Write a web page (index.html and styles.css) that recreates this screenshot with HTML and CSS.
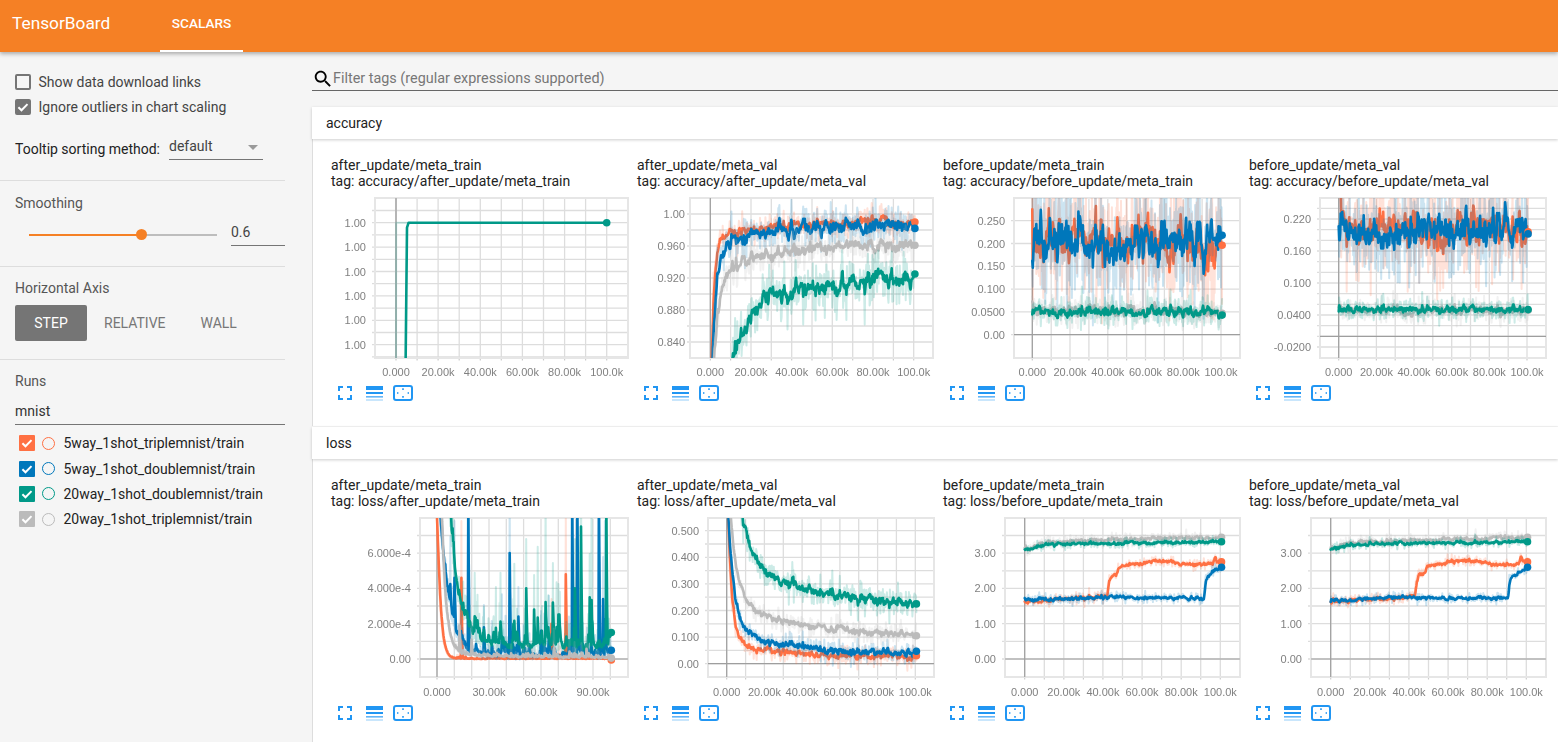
FILE: index.html
```html
<!DOCTYPE html>
<html lang="en">
<head>
<meta charset="utf-8">
<title>TensorBoard</title>
<link rel="stylesheet" href="styles.css">
</head>
<body>
<svg class="defs" width="0" height="0" aria-hidden="true">
  <symbol id="i-full" viewBox="0 0 14 14"><path class="i-stroke" d="M1 5V1h4M9 1h4v4M13 9v4H9M5 13H1V9"/></symbol>
  <symbol id="i-lines" viewBox="0 0 17 15"><rect class="i-fill" x="0" y="0" width="17" height="4"/><rect class="i-fill" x="0" y="6" width="17" height="2"/><rect class="i-fill i-p1" x="0" y="10" width="17" height="1.6"/><rect class="i-fill i-p2" x="0" y="13.4" width="17" height="1.2"/></symbol>
  <symbol id="i-fit" viewBox="0 0 20 16"><rect class="i-stroke" x="1" y="1" width="18" height="14" rx="2"/><rect class="i-fill" x="9" y="3.4" width="2" height="1.4"/><rect class="i-fill" x="9" y="11.2" width="2" height="1.4"/><rect class="i-fill" x="4" y="7.2" width="1.4" height="1.6"/><rect class="i-fill" x="14.6" y="7.2" width="1.4" height="1.6"/></symbol>
  <symbol id="i-check" viewBox="0 0 16 16"><path class="i-check" d="M3.4 8.2l3.1 3.1 6-6.2"/></symbol>
</svg>

<header class="toolbar">
  <div class="brand">TensorBoard</div>
  <div class="tab">SCALARS</div>
</header>

<div class="layout">
  <aside class="sidebar">
    <section class="sec sec-options">
      <div class="check-row"><span class="box"></span><span>Show data download links</span></div>
      <div class="check-row"><span class="box box-on"><svg class="tick-mark"><use href="#i-check"/></svg></span><span>Ignore outliers in chart scaling</span></div>
      <div class="tooltip-row">
        <span class="tooltip-label">Tooltip sorting method:</span>
        <span class="select"><span>default</span><span class="caret"></span></span>
      </div>
    </section>
    <section class="sec sec-smooth">
      <div class="sec-title">Smoothing</div>
      <div class="slider-row">
        <div class="slider"><div class="slider-done"></div><div class="slider-thumb"></div></div>
        <div class="slider-value">0.6</div>
      </div>
    </section>
    <section class="sec sec-axis">
      <div class="sec-title">Horizontal Axis</div>
      <div class="axis-buttons">
        <span class="axis-btn axis-on">STEP</span>
        <span class="axis-btn axis-rel">RELATIVE</span>
        <span class="axis-btn axis-wall">WALL</span>
      </div>
    </section>
    <section class="sec sec-runs">
      <div class="sec-title">Runs</div>
      <div class="runs-filter">mnist</div>
      <div class="run"><span class="run-box c-orange"><svg class="tick-mark"><use href="#i-check"/></svg></span><span class="run-dot c-orange"></span><span>5way_1shot_triplemnist/train</span></div>
      <div class="run"><span class="run-box c-blue"><svg class="tick-mark"><use href="#i-check"/></svg></span><span class="run-dot c-blue"></span><span>5way_1shot_doublemnist/train</span></div>
      <div class="run"><span class="run-box c-teal"><svg class="tick-mark"><use href="#i-check"/></svg></span><span class="run-dot c-teal"></span><span>20way_1shot_doublemnist/train</span></div>
      <div class="run"><span class="run-box c-gray"><svg class="tick-mark"><use href="#i-check"/></svg></span><span class="run-dot c-gray"></span><span>20way_1shot_triplemnist/train</span></div>
    </section>
  </aside>

  <main class="main">
    <div class="filter">
      <svg class="search" viewBox="0 0 24 24"><path d="M15.5 14h-.79l-.28-.27C15.41 12.59 16 11.11 16 9.5 16 5.91 13.09 3 9.5 3S3 5.91 3 9.5 5.91 16 9.5 16c1.61 0 3.09-.59 4.23-1.57l.27.28v.79l5 4.99L20.49 19l-4.99-5zm-6 0C7.01 14 5 11.99 5 9.5S7.01 5 9.5 5 14 7.01 14 9.5 11.99 14 9.5 14z"/></svg>
      <span class="filter-text">Filter tags (regular expressions supported)</span>
    </div>

    <section class="pane">
      <h2 class="pane-head">accuracy</h2>
      <div class="cards">
        <article class="card">
          <div class="card-title">after_update/meta_train<br>tag: accuracy/after_update/meta_train</div>
          <svg class="plot" data-chart="a1" data-col="0" data-row="0"></svg>
          <div class="tools"><svg class="t-full"><use href="#i-full"/></svg><svg class="t-lines"><use href="#i-lines"/></svg><svg class="t-fit"><use href="#i-fit"/></svg></div>
        </article>
        <article class="card">
          <div class="card-title">after_update/meta_val<br>tag: accuracy/after_update/meta_val</div>
          <svg class="plot" data-chart="a2" data-col="1" data-row="0"></svg>
          <div class="tools"><svg class="t-full"><use href="#i-full"/></svg><svg class="t-lines"><use href="#i-lines"/></svg><svg class="t-fit"><use href="#i-fit"/></svg></div>
        </article>
        <article class="card">
          <div class="card-title">before_update/meta_train<br>tag: accuracy/before_update/meta_train</div>
          <svg class="plot" data-chart="a3" data-col="2" data-row="0"></svg>
          <div class="tools"><svg class="t-full"><use href="#i-full"/></svg><svg class="t-lines"><use href="#i-lines"/></svg><svg class="t-fit"><use href="#i-fit"/></svg></div>
        </article>
        <article class="card">
          <div class="card-title">before_update/meta_val<br>tag: accuracy/before_update/meta_val</div>
          <svg class="plot" data-chart="a4" data-col="3" data-row="0"></svg>
          <div class="tools"><svg class="t-full"><use href="#i-full"/></svg><svg class="t-lines"><use href="#i-lines"/></svg><svg class="t-fit"><use href="#i-fit"/></svg></div>
        </article>
      </div>
    </section>

    <section class="pane">
      <h2 class="pane-head">loss</h2>
      <div class="cards">
        <article class="card">
          <div class="card-title">after_update/meta_train<br>tag: loss/after_update/meta_train</div>
          <svg class="plot" data-chart="l1" data-col="0" data-row="1"></svg>
          <div class="tools"><svg class="t-full"><use href="#i-full"/></svg><svg class="t-lines"><use href="#i-lines"/></svg><svg class="t-fit"><use href="#i-fit"/></svg></div>
        </article>
        <article class="card">
          <div class="card-title">after_update/meta_val<br>tag: loss/after_update/meta_val</div>
          <svg class="plot" data-chart="l2" data-col="1" data-row="1"></svg>
          <div class="tools"><svg class="t-full"><use href="#i-full"/></svg><svg class="t-lines"><use href="#i-lines"/></svg><svg class="t-fit"><use href="#i-fit"/></svg></div>
        </article>
        <article class="card">
          <div class="card-title">before_update/meta_train<br>tag: loss/before_update/meta_train</div>
          <svg class="plot" data-chart="l3" data-col="2" data-row="1"></svg>
          <div class="tools"><svg class="t-full"><use href="#i-full"/></svg><svg class="t-lines"><use href="#i-lines"/></svg><svg class="t-fit"><use href="#i-fit"/></svg></div>
        </article>
        <article class="card">
          <div class="card-title">before_update/meta_val<br>tag: loss/before_update/meta_val</div>
          <svg class="plot" data-chart="l4" data-col="3" data-row="1"></svg>
          <div class="tools"><svg class="t-full"><use href="#i-full"/></svg><svg class="t-lines"><use href="#i-lines"/></svg><svg class="t-fit"><use href="#i-fit"/></svg></div>
        </article>
      </div>
    </section>
  </main>
</div>
<script src="charts.js"></script>
</body>
</html>
```

FILE: styles.css
```css
* { box-sizing: border-box; }
html, body { margin: 0; height: 100%; overflow: hidden; }
body {
  background: #f5f5f5;
  color: #333;
  font-family: Roboto, "Liberation Sans", sans-serif;
  font-size: 14px;
  display: flex;
  flex-direction: column;
}
.defs { position: absolute; }

/* Toolbar */
.toolbar {
  flex: none;
  height: 52px;
  background: #f58025;
  color: #fff;
  display: flex;
  box-shadow: 0 2px 4px rgba(0, 0, 0, .3);
  position: relative;
  z-index: 2;
}
.brand { width: 160px; padding-left: 12px; font-size: 17.3px; line-height: 47px; }
.tab {
  width: 83px;
  text-align: center;
  font-size: 13.6px;
  font-weight: 500;
  line-height: 47px;
  border-bottom: 2px solid #fff;
  height: 52px;
}

.layout { flex: 1; display: flex; min-height: 0; }

/* Sidebar */
.sidebar { flex: none; width: 312px; padding-right: 27px; }
.sec { padding-left: 15px; border-bottom: 1px solid #ddd; }
.sec:last-child { border-bottom: 0; }
.sec-options { height: 129px; padding-top: 22px; }
.sec-smooth { height: 86px; padding-top: 14px; }
.sec-axis { height: 93px; padding-top: 13px; }
.sec-runs { padding-top: 13px; padding-right: 0; }
.sec-title { line-height: 16px; color: #555; }

.check-row { display: flex; align-items: center; height: 16px; margin-bottom: 9px; color: #444; gap: 7.5px; }
.box { flex: none; width: 16px; height: 16px; border: 2px solid #757575; border-radius: 2px; }
.box-on { background: #757575; }
.tick-mark { display: block; width: 16px; height: 16px; }
.box .tick-mark { margin: -2px; }
.i-check { fill: none; stroke: #fff; stroke-width: 2; }

.tooltip-row { display: flex; margin-top: 21px; height: 24px; align-items: flex-start; }
.tooltip-label { width: 154px; color: #222; line-height: 24px; padding-top: 1px; }
.select {
  width: 94px;
  height: 24px;
  border-bottom: 1px solid #757575;
  line-height: 20px;
  display: flex;
  justify-content: space-between;
  color: #444;
}
.caret {
  margin: 9px 5px 0 0;
  width: 0;
  height: 0;
  border: 5px solid transparent;
  border-top-color: #9a9a9a;
  border-bottom: 0;
}

.slider-row { display: flex; margin-top: 8px; }
.slider { width: 188px; height: 2px; margin: 15px 0 0 14px; background: #bdbdbd; position: relative; }
.slider-done { width: 112px; height: 2px; background: #f58025; }
.slider-thumb {
  position: absolute;
  left: 106.5px;
  top: -5px;
  width: 11px;
  height: 11px;
  border-radius: 50%;
  background: #f58025;
}
.slider-value {
  width: 54px;
  height: 27px;
  margin-left: 14px;
  padding-top: 3px;
  line-height: 20px;
  color: #444;
  border-bottom: 1px solid #757575;
}

.axis-buttons { display: flex; margin-top: 9px; }
.axis-btn { line-height: 36px; color: #777; }
.axis-on { width: 72px; background: #757575; color: #fff; border-radius: 2px; text-align: center; }
.axis-rel { margin-left: 17px; }
.axis-wall { margin-left: 35px; }

.runs-filter {
  margin-top: 12px;
  height: 24px;
  line-height: 20px;
  color: #333;
  border-bottom: 1px solid #757575;
  padding-top: 0;
}
.run { display: flex; align-items: center; height: 25.2px; color: #222; }
.runs-filter + .run { margin-top: 5.9px; }
.run-box { flex: none; width: 16px; height: 16px; margin-left: 4px; border-radius: 1px; }
.run-dot { flex: none; width: 13px; height: 13px; margin: 0 8.5px 0 7px; border-radius: 50%; border: 1.7px solid; background: transparent; }
.run-box.c-orange { background: #ff7043; }
.run-box.c-blue { background: #0077bb; }
.run-box.c-teal { background: #009988; }
.run-box.c-gray { background: #bbb; }
.run-dot.c-orange { border-color: #ff7043; }
.run-dot.c-blue { border-color: #0077bb; }
.run-dot.c-teal { border-color: #009988; }
.run-dot.c-gray { border-color: #bbb; }

/* Main */
.main { flex: 1; min-width: 0; }
.filter {
  height: 39px;
  margin-bottom: 16px;
  border-bottom: 1px solid #666;
  display: flex;
  align-items: flex-start;
}
.search { flex: none; width: 22px; height: 22px; margin-top: 16px; margin-right: -1px; }
.filter-text { color: #777; font-size: 14.4px; line-height: 20px; padding-top: 17px; }
.pane { background: #fff; margin-bottom: 1px; }
.pane-head {
  margin: 0;
  height: 32px;
  padding-left: 14px;
  font-size: 14px;
  font-weight: 400;
  line-height: 32px;
  color: #222;
  background: #fff;
  box-shadow: 0 1px 3px rgba(0, 0, 0, .2);
  position: relative;
}
.cards { display: flex; border-left: 1px solid #ddd; height: 287px; margin-right: -10px; }
.card { flex: none; width: 306px; padding-top: 18px; }
.card:first-child { width: 305px; }
.card-title { padding-left: 19px; height: 32px; line-height: 16px; font-size: 14px; color: #222; white-space: nowrap; }
.card:first-child .card-title { padding-left: 18px; }
.plot { display: block; width: 306px; height: 192px; overflow: visible; filter: blur(.35px); }
.card:first-child .plot { margin-left: -1px; }

.tools { display: flex; align-items: center; height: 16px; margin-top: 4px; padding-left: 26px; }
.card:first-child .tools { padding-left: 25px; }
.t-full { width: 14px; height: 14px; }
.t-lines { width: 17px; height: 15px; margin-left: 14px; }
.t-fit { width: 20px; height: 16px; margin-left: 10px; }
.i-stroke { fill: none; stroke: #2196f3; stroke-width: 2; }
.i-fill { fill: #2196f3; }
.i-p1 { opacity: .7; }
.i-p2 { opacity: .4; }

/* Chart parts */
.g-line { stroke: #ddd; stroke-width: 1.3; fill: none; }
.g-edge { stroke: #e6e6e6; stroke-width: 2; fill: none; }
.g-tick { stroke: #ccc; stroke-width: 1.2; fill: none; }
.g-axis { stroke: #9e9e9e; stroke-width: 1.2; fill: none; }
.g-axis-strong { stroke: #b5b5b5; stroke-width: 2; fill: none; }
.t-y, .t-x { font-family: "Liberation Sans", Arial, sans-serif; font-size: 11px; fill: #808080; }
.t-y { text-anchor: end; }
.t-x { text-anchor: middle; }
.line { fill: none; stroke-linejoin: round; stroke-linecap: round; }
.smooth { stroke-width: 2.6; }
.raw { stroke-width: 2; opacity: .2; }
.s-orange { stroke: #ff7043; }
.s-blue { stroke: #0077bb; }
.s-teal { stroke: #009988; }
.s-gray { stroke: #bbb; }
.d-orange { fill: #ff7043; }
.d-blue { fill: #0077bb; }
.d-teal { fill: #009988; }
.d-gray { fill: #bbb; }
```

FILE: charts.js
```js
(function () {
  var NS_X = ['0.000', '20.00k', '40.00k', '60.00k', '80.00k', '100.0k'];

  function rng(seed) {
    return function () {
      seed |= 0; seed = seed + 0x6D2B79F5 | 0;
      var t = Math.imul(seed ^ seed >>> 15, 1 | seed);
      t = t + Math.imul(t ^ t >>> 7, 61 | t) ^ t;
      return ((t ^ t >>> 14) >>> 0) / 4294967296;
    };
  }
  function lerp(pts) {
    return function (t) {
      if (t <= pts[0][0]) return pts[0][1];
      for (var i = 1; i < pts.length; i++) {
        if (t <= pts[i][0]) {
          var a = pts[i - 1], b = pts[i];
          return a[1] + (b[1] - a[1]) * (t - a[0]) / (b[0] - a[0]);
        }
      }
      return pts[pts.length - 1][1];
    };
  }
  var e = Math.exp;

  var CHARTS = {
    a1: {
      l: 375, r: 628, t: 198, b: 358, x0: 396, x100: 606.7, edge: 366,
      y0: 222.7, k: -24.4, sub: 2, strongAxis: true,
      labels: [[0, '1.00'], [1, '1.00'], [2, '1.00'], [3, '1.00'], [4, '1.00'], [5, '1.00']],
      series: [{ c: 'teal', sigma: 0, seed: 1, flat: true,
        mean: lerp([[0.044, 7], [0.052, 0.2], [0.06, 0], [1, 0]]),
        rawMean: lerp([[0, 7], [0.001, 0], [0.07, 0]]) }]
    },
    a2: {
      l: 690, r: 933, t: 198, b: 358, x0: 710.3, x100: 913.7, edge: 685,
      y0: 214, k: -800, base: 1, sub: 2,
      labels: [[1, '1.00'], [0.96, '0.960'], [0.92, '0.920'], [0.88, '0.880'], [0.84, '0.840']],
      series: [
        { c: 'orange', seed: 11, sigma: 0.006, end: 0.99, mean: function (t) { return 0.99 - 0.02 * e(-t / 0.25) - 0.22 * e(-t / 0.012); } },
        { c: 'blue', seed: 12, sigma: 0.009, end: 0.982, mean: function (t) { return 0.985 - 0.03 * e(-t / 0.2) - 0.2 * e(-t / 0.02); } },
        { c: 'gray', seed: 13, sigma: 0.008, end: 0.961, mean: function (t) { return 0.963 - 0.035 * e(-t / 0.3) - 0.2 * e(-t / 0.025); } },
        { c: 'teal', seed: 14, sigma: 0.012, end: 0.925, mean: function (t) { return 0.925 - 0.05 * e(-t / 0.4) - 0.3 * e(-t / 0.07); } }
      ]
    },
    a3: {
      l: 1014, r: 1240, t: 198, b: 358, x0: 1032.3, x100: 1221, edge: 1005,
      y0: 334.7, k: 456, sub: 1, zero: true,
      labels: [[0.25, '0.250'], [0.2, '0.200'], [0.15, '0.150'], [0.1, '0.100'], [0.05, '0.0500'], [0, '0.00']],
      series: [
        { c: 'orange', seed: 21, sigma: 0.052, end: 0.196, mean: function () { return 0.2; } },
        { c: 'blue', seed: 22, sigma: 0.048, end: 0.218, mean: function () { return 0.205; } },
        { c: 'gray', seed: 23, sigma: 0.011, end: 0.047, mean: function () { return 0.051; } },
        { c: 'teal', seed: 24, sigma: 0.011, end: 0.043, mean: function () { return 0.05; } }
      ]
    },
    a4: {
      l: 1320, r: 1546, t: 198, b: 358, x0: 1338.7, x100: 1527, edge: 1311,
      y0: 336.3, k: 533.3, sub: 3, zero: true,
      labels: [[0.22, '0.220'], [0.16, '0.160'], [0.1, '0.100'], [0.04, '0.0400'], [-0.02, '-0.0200']],
      series: [
        { c: 'orange', seed: 31, sigma: 0.034, end: 0.196, mean: function (t) { return 0.197 + 0.3 * e(-t / 0.004); } },
        { c: 'blue', seed: 32, sigma: 0.03, end: 0.192, mean: function () { return 0.198; } },
        { c: 'gray', seed: 33, sigma: 0.008, end: 0.049, mean: function () { return 0.049; } },
        { c: 'teal', seed: 34, sigma: 0.007, end: 0.05, mean: function () { return 0.05; } }
      ]
    },
    l1: {
      l: 420, r: 628, t: 518, b: 677, x0: 437, x100: 610.3, edge: 411, every: 3,
      y0: 659, k: 17.65, sub: 2, zero: true,
      labels: [[6, '6.000e-4'], [4, '4.000e-4'], [2, '2.000e-4'], [0, '0.00']],
      xLabels: ['0.000', '30.00k', '60.00k', '90.00k'],
      series: [
        { c: 'orange', seed: 41, sigma: 0.03, tail: true, end: -0.05, mean: function (t) { return 0.02 + 8 * e(-t / 0.018); },
          spikes: [[0.14, 4.6], [0.66, 2], [0.742, 4.8]] },
        { c: 'blue', seed: 42, sigma: 0.22, tail: true, end: 0.5, mean: function (t) { return 0.26 + 0.7 * e(-t / 0.1) + 10 * e(-t / 0.05); },
          spikes: [[0.18, 9], [0.42, 6], [0.78, 9], [0.81, 9], [0.935, 9], [0.957, 3.4], [0.1, 4.6], [0.27, 1.8], [0.47, 2.4], [0.6, 1.6]] },
        { c: 'teal', seed: 43, sigma: 0.36, tail: true, end: 1.5, mean: function (t) { return 0.72 + 0.8 * e(-t / 0.2) + 30 * e(-t / 0.05); },
          spikes: [[0.515, 4], [0.67, 3.2], [0.795, 4], [0.83, 7.5], [0.88, 3.5], [0.977, 9], [0.7, 2.5], [0.56, 2.8], [0.44, 2]] },
        { c: 'gray', seed: 44, sigma: 0.07, tail: true, end: 0.05, mean: function (t) { return 0.08 + 0.3 * e(-t / 0.25) + 20 * e(-t / 0.025); },
          spikes: [[0.13, 1.9], [0.2, 1.1]] }
      ]
    },
    l2: {
      l: 708, r: 934, t: 518, b: 677, x0: 726.7, x100: 915.3, edge: 699,
      y0: 663.7, k: 266, sub: 2, zero: true,
      labels: [[0.5, '0.500'], [0.4, '0.400'], [0.3, '0.300'], [0.2, '0.200'], [0.1, '0.100'], [0, '0.00']],
      series: [
        { c: 'orange', seed: 51, sigma: 0.012, end: 0.03, mean: function (t) { return 0.028 + 0.06 * e(-t / 0.2) + 0.6 * e(-t / 0.02); } },
        { c: 'blue', seed: 52, sigma: 0.014, end: 0.047, mean: function (t) { return 0.04 + 0.1 * e(-t / 0.25) + 0.5 * e(-t / 0.03); } },
        { c: 'gray', seed: 53, sigma: 0.013, end: 0.105, mean: function (t) { return 0.1 + 0.13 * e(-t / 0.4) + 0.5 * e(-t / 0.04); } },
        { c: 'teal', seed: 54, sigma: 0.02, end: 0.225, mean: function (t) { return 0.205 + 0.19 * e(-t / 0.45) + 0.7 * e(-t / 0.06); } }
      ]
    },
    l3: {
      l: 1005, r: 1240, t: 518, b: 677, x0: 1024.7, x100: 1220.3, edge: 996,
      y0: 659, k: 35.3, sub: 2, zero: true,
      labels: [[3, '3.00'], [2, '2.00'], [1, '1.00'], [0, '0.00']],
      series: lossSeries(61, 0.43, 0.915)
    },
    l4: {
      l: 1311, r: 1546, t: 518, b: 677, x0: 1330.7, x100: 1526.3, edge: 1302,
      y0: 659, k: 35.3, sub: 2, zero: true,
      labels: [[3, '3.00'], [2, '2.00'], [1, '1.00'], [0, '0.00']],
      series: lossSeries(71, 0.44, 0.905)
    }
  };

  function lossSeries(seed, oj, bj) {
    return [
      { c: 'orange', seed: seed, sigma: 0.05, end: 2.75, mean: lerp([[0, 1.62], [oj - 0.01, 1.78], [oj, 2.35], [oj + 0.035, 2.4], [oj + 0.05, 2.65], [0.7, 2.8], [0.85, 2.65], [0.96, 2.7], [0.97, 3], [0.98, 2.75], [1.01, 2.75]]) },
      { c: 'blue', seed: seed + 1, sigma: 0.05, end: 2.6, mean: lerp([[0, 1.65], [0.3, 1.74], [bj, 1.73], [bj + 0.008, 2.3], [0.96, 2.48], [1.01, 2.6]]) },
      { c: 'gray', seed: seed + 2, sigma: 0.055, end: 3.45, mean: lerp([[0, 3.12], [0.1, 3.28], [0.4, 3.38], [1.01, 3.45]]) },
      { c: 'teal', seed: seed + 3, sigma: 0.045, end: 3.32, mean: lerp([[0, 3.1], [0.1, 3.24], [0.4, 3.28], [1.01, 3.32]]) }
    ];
  }

  function poly(cls, x1, y1, x2, y2) {
    return '<line class="' + cls + '" x1="' + x1 + '" y1="' + y1 + '" x2="' + x2 + '" y2="' + y2 + '"/>';
  }

  function seriesSvg(c, s, clipId, dotOut) {
    var sx = (c.x100 - c.x0);
    function X(t) { return c.x0 + sx * t; }
    function Y(v) { return c.base !== undefined ? c.y0 + (c.base - v) * -c.k : c.y0 - v * c.k; }

    var n = 380, tMax = 1.006, rawGain = 1.5;
    var R = rng(s.seed * 7919);
    function gauss() { return Math.sqrt(-2 * Math.log(R() + 1e-9)) * Math.cos(2 * Math.PI * R()); }
    var raw = [], smooth = [], shown = [], wander = 0, last = 0, i;
    for (i = 0; i < n; i++) {
      var t = i / (n - 1) * tMax;
      wander = 0.97 * wander + 0.035 * s.sigma * gauss();
      var noise = s.tail ? s.sigma * (e(0.95 * gauss()) - 1) : s.sigma * gauss();
      var m = s.mean(t);
      raw[i] = m + noise + wander;
      shown[i] = m + (noise + wander) * rawGain;
      last = last * 0.6 + raw[i] * 0.4;
      smooth[i] = last / (1 - Math.pow(0.6, i + 1));
    }
    (s.spikes || []).forEach(function (sp) {
      var at = Math.round(sp[0] / tMax * (n - 1));
      var b = smooth[at];
      smooth[at] = Math.max(b, sp[1]);
      shown[at] = sp[1] * 1.7;
      [0.6, 0.25].forEach(function (f, j) {
        if (at + j + 1 < n) smooth[at + j + 1] = Math.max(smooth[at + j + 1], b + (sp[1] - b) * f);
      });
    });
    if (s.end !== undefined) {
      for (i = n - 8; i < n; i++) {
        var f = (i - (n - 8)) / 7;
        smooth[i] = smooth[i] * (1 - f) + s.end * f;
      }
    }

    var rawPts = '', smoothPts = '', endV = smooth[n - 1];
    if (s.flat) {
      rawPts = [0, 0.001, 0.07].map(function (tt) { return X(tt).toFixed(1) + ',' + Y(s.rawMean(tt)).toFixed(1); }).join(' ');
      smoothPts = [0.044, 0.052, 0.06, 1].map(function (tt) { return X(tt).toFixed(1) + ',' + Y(s.mean(tt)).toFixed(1); }).join(' ');
      endV = 0;
    } else {
      for (i = 0; i < n; i++) {
        var tx = X(i / (n - 1) * tMax).toFixed(1);
        rawPts += tx + ',' + Y(shown[i]).toFixed(1) + ' ';
        smoothPts += tx + ',' + Y(smooth[i]).toFixed(1) + ' ';
      }
    }
    var endX = s.flat ? X(1) : X(tMax);
    dotOut.push('<circle class="d-' + s.c + '" cx="' + endX.toFixed(1) + '" cy="' + Y(endV).toFixed(1) + '" r="3.8"/>');
    return '<g clip-path="url(#' + clipId + ')">' +
      '<polyline class="line raw s-' + s.c + '" points="' + rawPts + '"/>' +
      '<polyline class="line smooth s-' + s.c + '" points="' + smoothPts + '"/></g>';
  }

  document.querySelectorAll('.plot').forEach(function (svg) {
    var name = svg.getAttribute('data-chart');
    var c = CHARTS[name];
    var col = +svg.getAttribute('data-col');
    var row = +svg.getAttribute('data-row');
    var vx = 312 + 306 * col, vy = 189 + 320 * row;
    svg.setAttribute('viewBox', vx + ' ' + vy + ' 306 192');

    function Y(v) { return c.base !== undefined ? c.y0 + (c.base - v) * -c.k : c.y0 - v * c.k; }
    var out = '';

    // horizontal grid
    var ys = c.labels.map(function (l) { return Y(l[0]); });
    var maj = Math.abs(ys[1] - ys[0]);
    var step = maj / (c.sub || 1);
    var gy = [];
    for (var y = ys[0]; y > c.t + 1; y -= step) gy.push(y);
    for (y = ys[0] + step; y < c.b - 1; y += step) gy.push(y);
    gy.forEach(function (v) {
      out += poly('g-line', c.l - 3, v.toFixed(1), c.r, v.toFixed(1));
    });

    // vertical grid, one line per 10k
    var dx = (c.x100 - c.x0) / 10, x;
    for (x = c.x0; x > c.l + 1; x -= dx) {
      out += poly('g-line', x.toFixed(1), c.t, x.toFixed(1), c.b);
      out += poly('g-tick', x.toFixed(1), c.b, x.toFixed(1), c.b + 2.5);
    }
    for (x = c.x0 + dx; x < c.r - 1; x += dx) {
      out += poly('g-line', x.toFixed(1), c.t, x.toFixed(1), c.b);
      out += poly('g-tick', x.toFixed(1), c.b, x.toFixed(1), c.b + 2.5);
    }
    // edges
    out += '<rect class="g-edge" x="' + c.l + '" y="' + c.t + '" width="' + (c.r - c.l) + '" height="' + (c.b - c.t) + '"/>';
    // axes
    out += poly(c.strongAxis ? 'g-axis-strong' : 'g-axis', c.x0, c.t, c.x0, c.b);
    if (c.zero) out += poly('g-axis', c.l, Y(0).toFixed(1), c.r, Y(0).toFixed(1));

    // series
    var clipId = 'clip-' + name;
    out += '<clipPath id="' + clipId + '"><rect x="' + c.l + '" y="' + c.t + '" width="' + (c.r - c.l) + '" height="' + (c.b - c.t) + '"/></clipPath>';
    var dots = [];
    c.series.forEach(function (s) { out += seriesSvg(c, s, clipId, dots); });
    out += dots.join('');

    // labels
    c.labels.forEach(function (l) {
      out += '<text class="t-y" x="' + c.edge + '" y="' + (Y(l[0]) + 4).toFixed(1) + '">' + l[1] + '</text>';
    });
    var every = c.every || 2;
    var xl = c.xLabels || NS_X;
    xl.forEach(function (lab, i) {
      out += '<text class="t-x" x="' + (c.x0 + dx * every * i).toFixed(1) + '" y="' + (c.t === 198 ? 375.5 : 695.5) + '">' + lab + '</text>';
    });
    svg.innerHTML = out;
  });
})();
```
